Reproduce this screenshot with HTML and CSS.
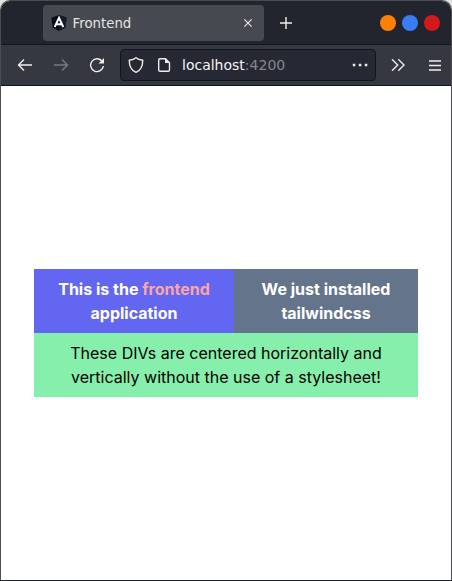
FILE: index.html
```html
<!DOCTYPE html>
<html lang="en">
<head>
<meta charset="utf-8">
<title>Frontend</title>
<link rel="stylesheet" href="styles.css">
</head>
<body>
<div class="window">
  <header class="tabbar">
    <div class="tab">
      <svg class="logo" width="16" height="16" viewBox="0 0 16 16"><path d="M8 0l7.600 2.700-1.200 9.800L8 16l-6.400-3.500L.4 2.700z" fill="#080d19"/><path d="M8 0l7.600 2.700-1.200 9.800L8 16z" fill="#161b28"/><path d="M3.700 12L8 2.800l4.300 9.200M5.400 9.200h5.200" fill="none" stroke="#fff" stroke-width="1.900"/></svg>
      <span class="title">Frontend</span>
      <svg class="close" width="8" height="8" viewBox="0 0 8 8"><path d="M.4.400l7.200 7.200M7.600.400L.4 7.600"/></svg>
    </div>
    <svg class="plus" width="12" height="12" viewBox="0 0 12 12"><path d="M6 0v12M0 6h12"/></svg>
    <div class="controls"><i class="dot orange"></i><i class="dot blue"></i><i class="dot red"></i></div>
  </header>
  <nav class="toolbar">
    <svg class="back" width="16" height="16" viewBox="0 0 16 16"><path d="M15 8H1.500M7 2.500L1.500 8 7 13.500"/></svg>
    <svg class="forward" width="16" height="16" viewBox="0 0 16 16"><path d="M1 8h13.500M9 2.500L14.500 8 9 13.500"/></svg>
    <svg class="reload" width="16" height="16" viewBox="0 0 16 16"><path d="M13.300 4.500A6.400 6.400 0 1 0 14.400 9"/><path class="solid" d="M15 1v5.500H9.500z"/></svg>
    <div class="address">
      <svg class="shield" width="16" height="16" viewBox="0 0 16 16"><path d="M8 .8C6 2.500 3.500 3 1.300 3.300 1.200 8.500 2.500 13 8 15.300 13.500 13 14.800 8.500 14.700 3.300 12.500 3 10 2.500 8 .8z"/></svg>
      <svg class="page" width="14" height="16" viewBox="0 0 14 16"><path d="M3 1.700h5.500l4 4V13q0 1.300-1.300 1.300H3q-1.300 0-1.300-1.300V3q0-1.300 1.300-1.300z"/><path class="solid" d="M8 1.500V6h4.500z"/></svg>
      <span class="url">localhost<span class="port">:4200</span></span>
      <svg class="more" width="16" height="4" viewBox="0 0 16 4"><path class="solid" d="M.8.700h2.500v2.500H.8zM6.800.700h2.500v2.500H6.800zM12.800.700h2.500v2.500h-2.500z"/></svg>
    </div>
    <svg class="chevrons" width="14" height="12" viewBox="0 0 14 12"><path d="M1 .3L6.700 6 1 11.700M7.300.3L13 6 7.300 11.700"/></svg>
    <svg class="menu" width="12" height="11" viewBox="0 0 12 11"><path d="M0 1h12M0 5.500h12M0 10h12"/></svg>
  </nav>
  <main class="content">
    <div class="box">
      <div class="cell indigo">This is the <span class="accent">frontend</span> application</div>
      <div class="cell slate">We just installed tailwindcss</div>
      <div class="cell green">These DIVs are centered horizontally and vertically without the use of a stylesheet!</div>
    </div>
  </main>
</div>
</body>
</html>
```
FILE: styles.css
```css
* { box-sizing: border-box; }
body { margin: 0; background: linear-gradient(#dfe3e1 0 20px, #4b4b52 20px); }
.window { display: flex; flex-direction: column; width: 452px; height: 581px; border: 1px solid #4b4b52; border-bottom-color: #20202c; border-radius: 10px 10px 0 0; overflow: hidden; background: #fff; }
svg { display: block; flex: none; fill: none; stroke: #eeeeea; stroke-width: 1.4; }
svg .solid { fill: #eeeeea; stroke: none; }
.tabbar { display: flex; align-items: center; height: 44px; padding: 0 11px 0 42px; background: #22252e; border-bottom: 1px solid #14161d; }
.tab { display: flex; align-items: center; width: 221px; height: 36px; margin-top: 1px; padding: 0 12px 0 8px; border-radius: 4px; background: #46494f; }
.logo { stroke: none; }
.title { flex: 1; margin: 1px 0 0 5.5px; font: 13.33px/18px "DejaVu Sans", sans-serif; color: #e4e4e2; }
.close { stroke-width: 1.1; }
.plus { margin: 1px 0 0 15.5px; }
.controls { display: flex; gap: 6px; margin-left: auto; }
.dot { width: 16px; height: 16px; border-radius: 50%; }
.orange { background: #ff8000; }
.blue { background: #397df2; }
.red { background: #d41919; }
.toolbar { display: flex; align-items: center; height: 41px; padding: 0 10px 0 16px; background: #353840; border-bottom: 1px solid #14131a; }
.forward { margin-left: 20px; stroke: #777a7e; }
.reload { margin-left: 20px; }
.address { display: flex; align-items: center; width: 256px; height: 32px; margin-left: 15px; padding: 0 7px; border: 1px solid #13151c; border-radius: 4px; background: #262934; }
.page { margin-left: 13px; }
.url { flex: 1; margin-left: 11px; font: 14px/18px "DejaVu Sans", sans-serif; color: #f4f4f2; }
.port { color: #85878e; }
.chevrons { margin-left: 15px; }
.menu { margin-left: auto; }
.content { flex: 1; display: grid; place-items: center; }
.box { display: grid; grid-template-columns: 200px 184px; font: 16px/24px Inter, sans-serif; text-align: center; color: #000; }
.cell { padding: 8px 20px; }
.indigo { background: #6366f1; color: #fff; font-weight: 700; }
.accent { color: #fca5a5; }
.slate { background: #64748b; color: #fff; font-weight: 700; }
.green { grid-column: 1 / -1; background: #86efac; }
```
